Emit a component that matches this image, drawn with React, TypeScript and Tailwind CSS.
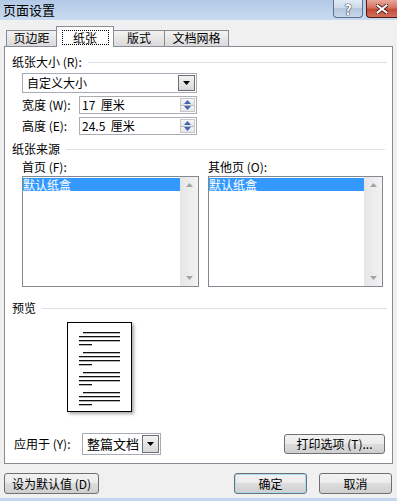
const FONT = "font-['Noto_Sans_CJK_SC','Noto_Sans',sans-serif]"

const BTN =
  'flex items-center justify-center border border-[#707070] rounded-[3px] bg-[linear-gradient(#f2f2f2_0%,#ebebeb_50%,#dddddd_50%,#cfcfcf_100%)] leading-none whitespace-pre'

function Tri({ up = false, color = '#000' }: { up?: boolean; color?: string }) {
  return (
    <svg width="7" height="4" viewBox="0 0 7 4">
      <path d={up ? 'M0 4H7L3.5 0Z' : 'M0 0H7L3.5 4Z'} fill={color} />
    </svg>
  )
}

function Combo({ value, className }: { value: string; className: string }) {
  return (
    <div className={`flex border border-[#a5acb5] bg-white ${className}`}>
      <span className="flex-1 pl-[4px] flex items-center">{value}</span>
      <span className="w-[17px] m-px flex items-center justify-center border border-[#6f6f6f] bg-[linear-gradient(#f3f3f3,#d8d8d8)]">
        <Tri />
      </span>
    </div>
  )
}

function Spin({ label, value }: { label: string; value: string }) {
  return (
    <div className="flex items-center h-[18px] mt-[3px] pl-[17px] whitespace-pre">
      <span className="w-[57px]">{label}</span>
      <div className="w-[118px] h-full flex border border-[#abadb3] bg-white">
        <span className="flex-1 pl-[2px] flex items-center">{value}</span>
        <div className="w-[15px] m-px flex flex-col border border-[#c3c7cf]">
          <span className="flex-1 flex items-center justify-center bg-[linear-gradient(#f7f7f7,#e4e4e4)] border-b border-[#b5b9c0]">
            <Tri up color="#3f66b3" />
          </span>
          <span className="flex-1 flex items-center justify-center bg-[linear-gradient(#f7f7f7,#e4e4e4)]">
            <Tri color="#3f66b3" />
          </span>
        </div>
      </div>
    </div>
  )
}

function Heading({ text, className = '' }: { text: string; className?: string }) {
  return (
    <div className={`flex items-center h-[12px] pl-[7px] whitespace-pre ${className}`}>
      <span>{text}</span>
      <div className="flex-1 h-px bg-[#d8e0e8] ml-[6px]" />
    </div>
  )
}

function ListBox({ label, className }: { label: string; className: string }) {
  return (
    <div className={`flex flex-col ${className}`}>
      <span className="h-[12px] leading-[12px] whitespace-pre">{label}</span>
      <div className="mt-[3px] h-[111px] flex border border-[#828790] bg-white">
        <div className="flex-1">
          <div className="h-[13px] mt-px leading-[13px] bg-[#3399ff] text-white">默认纸盒</div>
        </div>
        <div className="w-[18px] flex flex-col items-center justify-between py-[6px] bg-[linear-gradient(90deg,#e6e6e6,#f2f2f2)]">
          <Tri up color="#a3a3a3" />
          <Tri color="#a3a3a3" />
        </div>
      </div>
    </div>
  )
}

function PagePreview() {
  const groups = [10, 30, 50, 70]
  return (
    <div className="ml-[62px] mt-[8px] w-[65px] h-[90px] border border-black bg-white shadow-[2px_2px_3px_rgba(0,0,0,0.35)]">
      <svg width="63" height="88" viewBox="0 0 63 88">
        {groups.map((y) => (
          <g key={y} fill="#111">
            <rect x="15" y={y - 1} width="37" height="1.3" />
            <rect x="11" y={y + 3} width="41" height="1.3" />
            <rect x="11" y={y + 7} width="41" height="1.3" />
            <rect x="11" y={y + 11} width="13" height="1.3" />
          </g>
        ))}
      </svg>
    </div>
  )
}

export default function App() {
  return (
    <div className={`w-[397px] h-[501px] flex flex-col overflow-hidden bg-[#f0f0f0] text-[12px] text-black ${FONT}`}>
      {/* title bar */}
      <div className="h-[20px] flex items-start bg-[linear-gradient(#b2c9e6,#c9dbf0)]">
        <span className="pl-[3px] pt-[3px] leading-[14px] text-[13px]">页面设置</span>
        <div className="ml-auto flex">
          <div className="w-[30px] h-[18px] mr-[3px] flex items-center justify-center border border-t-0 border-[#5d718c] rounded-b-[4px] bg-[linear-gradient(#e2ebf6_0%,#cbd9ea_50%,#b6c8df_50%,#c7d7ea_100%)]">
            <span className="text-[14px] font-bold leading-none text-white [text-shadow:0_0_1px_#2b3a4f,0_0_1px_#2b3a4f,0_0_1px_#2b3a4f]">?</span>
          </div>
          <div className="w-[31px] h-[18px] flex items-center justify-center border border-t-0 border-r-0 border-[#4f1a16] rounded-bl-[4px] bg-[linear-gradient(#e9a99b_0%,#d6725f_45%,#c44b37_55%,#d2705a_100%)]">
            <svg width="12" height="10" viewBox="0 0 12 10">
              <path d="M1.5 1.5L10.5 8.5M10.5 1.5L1.5 8.5" stroke="#3b1410" strokeWidth="3.6" strokeLinecap="square" />
              <path d="M1.5 1.5L10.5 8.5M10.5 1.5L1.5 8.5" stroke="#fff" strokeWidth="2" strokeLinecap="square" />
            </svg>
          </div>
        </div>
      </div>

      {/* body */}
      <div className="flex-1 flex flex-col pt-[6px] px-[4px]">
        {/* tabs */}
        <div className="flex items-end h-[21px] pl-[2px]">
          <div className="w-[50px] h-[17px] flex items-center justify-center pb-px border border-[#898c95] border-r-0 bg-[linear-gradient(#f3f3f3,#dadada)]">
            页边距
          </div>
          <div className="relative z-10 w-[58px] h-[21px] flex items-start justify-center pt-[3px] border border-b-0 border-[#898c95] bg-white">
            <span className="w-[47px] h-[15px] flex items-center justify-center border border-dotted border-black">纸张</span>
          </div>
          <div className="w-[51px] h-[17px] flex items-center justify-center pb-px border border-l-0 border-[#898c95] bg-[linear-gradient(#f3f3f3,#dadada)]">
            版式
          </div>
          <div className="w-[64px] h-[17px] flex items-center justify-center pb-px border border-l-0 border-[#898c95] bg-[linear-gradient(#f3f3f3,#dadada)]">
            文档网格
          </div>
        </div>

        {/* panel */}
        <div className="-mt-px h-[418px] flex flex-col border border-[#898c95] bg-white">
          <Heading text="纸张大小 (R):" className="mt-[9px] pr-[5px]" />
          <Combo value="自定义大小" className="mt-[5px] ml-[17px] w-[175px] h-[20px]" />
          <Spin label="宽度 (W):" value="17  厘米" />
          <Spin label="高度 (E):" value="24.5  厘米" />

          <Heading text="纸张来源" className="mt-[8px] pr-[7px]" />
          <div className="flex mt-[6px] pl-[17px] gap-[9px]">
            <ListBox label="首页 (F):" className="w-[177px]" />
            <ListBox label="其他页 (O):" className="w-[175px]" />
          </div>

          <Heading text="预览" className="mt-[15px] pr-[5px]" />
          <PagePreview />

          <div className="mt-auto mb-[8px] h-[22px] flex items-center pl-[9px] pr-[7px] whitespace-pre">
            <span className="w-[68px]">应用于 (Y):</span>
            <Combo value="整篇文档" className="w-[79px] h-[22px] text-[13px]" />
            <button className={`${BTN} ml-auto w-[101px] h-[20px]`}>打印选项 (T)...</button>
          </div>
        </div>

        {/* footer buttons */}
        <div className="mt-[9px] flex">
          <button className={`${BTN} w-[95px] h-[21px]`}>设为默认值 (D)</button>
          <button className={`${BTN} ml-auto w-[73px] h-[21px] border-[#3c7fb1] shadow-[inset_0_0_0_1px_#a6dcf5]`}>确定</button>
          <button className={`${BTN} ml-[12px] mr-px w-[73px] h-[21px]`}>取消</button>
        </div>
      </div>

      <div className="h-[3px] bg-[#c3d8ef]" />
    </div>
  )
}
